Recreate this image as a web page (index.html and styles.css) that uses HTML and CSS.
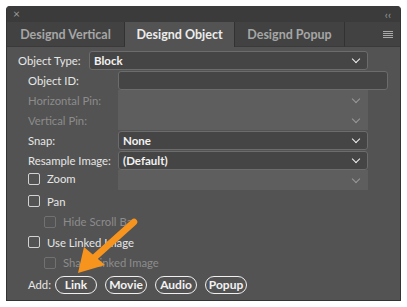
FILE: index.html
```html
<!DOCTYPE html>
<html lang="en">
<head>
  <meta charset="UTF-8" />
  <title>Designd Object</title>
  <link rel="stylesheet" href="styles.css">
</head>
<body>
  <div class="panel">
    <div class="titlebar">
      <span class="close">&times;</span>
      <span class="collapse">&lsaquo;&lsaquo;</span>
    </div>

    <div class="tabs">
      <div class="tab">Designd Vertical</div>
      <div class="tab active">Designd Object</div>
      <div class="tab">Designd Popup</div>
      <div class="tab-fill">
        <svg width="10" height="7" viewBox="0 0 10 7"><path d="M0 .5h10M0 2.5h10M0 4.5h10M0 6.5h10" stroke="#a9a9a9" stroke-width="1"/></svg>
      </div>
    </div>

    <div class="form">
      <div class="row first">
        <label class="lbl lbl-type">Object Type:</label>
        <div class="select wide">Block <span class="chev"></span></div>
      </div>
      <div class="row">
        <label class="lbl">Object ID:</label>
        <div class="input"></div>
      </div>
      <div class="row">
        <label class="lbl off">Horizontal Pin:</label>
        <div class="select disabled"><span class="chev"></span></div>
      </div>
      <div class="row">
        <label class="lbl off">Vertical Pin:</label>
        <div class="select disabled"><span class="chev"></span></div>
      </div>
      <div class="row">
        <label class="lbl">Snap:</label>
        <div class="select">None <span class="chev"></span></div>
      </div>
      <div class="row">
        <label class="lbl">Resample Image:</label>
        <div class="select">(Default) <span class="chev"></span></div>
      </div>
      <div class="row">
        <label class="lbl check zoom"><span class="box"></span>Zoom</label>
        <div class="select disabled tall"><span class="chev"></span></div>
      </div>
      <div class="row check-row pan">
        <label class="check"><span class="box"></span>Pan</label>
      </div>
      <div class="row check-row sub">
        <label class="check off"><span class="box"></span>Hide Scroll Bar</label>
      </div>
      <div class="row check-row linked">
        <label class="check"><span class="box"></span>Use Linked Image</label>
      </div>
      <div class="row check-row sub">
        <label class="check off"><span class="box"></span>Share Linked Image</label>
      </div>
      <div class="row add-row">
        <span>Add:</span>
        <button class="pill">Link</button>
        <button class="pill">Movie</button>
        <button class="pill">Audio</button>
        <button class="pill">Popup</button>
      </div>
    </div>
  </div>

  <!-- callout arrow drawn over the panel -->
  <svg class="arrow" width="407" height="307" viewBox="0 0 407 307">
    <line x1="134" y1="222" x2="95" y2="257" stroke="#f7941e" stroke-width="6.5" stroke-linecap="round"/>
    <polygon points="78,273 84,247 105,265" fill="#f7941e"/>
  </svg>
</body>
</html>
```

FILE: styles.css
```css
* { box-sizing: border-box; }

body {
  margin: 0;
  padding: 6px 6px 0 6px;
  background: #ffffff;
  font-family: 'Lato', 'Open Sans', sans-serif;
  font-size: 11.3px;
  color: #e6e6e6;
}

.panel {
  width: 395px;
  height: 295px;
  background: #535353;
  border: 1px solid #333333;
  border-top: none;
  border-radius: 4px 4px 0 0;
  overflow: hidden;
}

.titlebar {
  height: 16px;
  background: #3b3b3b;
  display: flex;
  justify-content: space-between;
  align-items: center;
  padding: 0 9px 0 6px;
  color: #9a9a9a;
}

.close { font-size: 12px; line-height: 1; }
.collapse { font-size: 11px; letter-spacing: 0; line-height: 1; }

.tabs {
  height: 25px;
  display: flex;
  background: #424242;
}

.tab {
  display: flex;
  align-items: center;
  justify-content: center;
  font-weight: 700;
  font-size: 12.5px;
  color: #a6a6a6;
  border-right: 1px solid #323232;
  border-bottom: 1px solid #3a3a3a;
}

.tab:nth-child(1) { width: 118px; }
.tab:nth-child(2) { width: 110px; }
.tab:nth-child(3) { width: 110px; }

.tab.active {
  background: #535353;
  color: #ececec;
  border-bottom: none;
}

.tab-fill {
  flex: 1;
  display: flex;
  align-items: center;
  justify-content: flex-end;
  padding-right: 7px;
  border-bottom: 1px solid #3a3a3a;
}

.form {
  padding: 3px 0 0 21px;
  display: flex;
  flex-direction: column;
}

.row {
  display: flex;
  align-items: center;
  height: 20px;
}

.row.first { margin-left: -10px; }

.lbl {
  width: 90px;
  flex-shrink: 0;
  white-space: nowrap;
}

.lbl-type { width: 71px; }

.off { color: #8c8c8c; }

.select, .input {
  height: 19px;
  width: 250px;
  background: #454545;
  border: 1px solid #6c6c6c;
  border-radius: 3px;
  display: flex;
  align-items: center;
  padding-left: 4px;
  font-weight: 700;
  font-size: 11.5px;
  color: #f2f2f2;
  position: relative;
}

.select.wide { width: 279px; }
.input { width: 270px; }

.select.disabled {
  background: #5e5e5e;
  border-color: #5e5e5e;
  border-radius: 0;
  height: 20px;
}

.chev {
  position: absolute;
  right: 8px;
  top: 4px;
  width: 6px;
  height: 6px;
  border-right: 1.5px solid #f0f0f0;
  border-bottom: 1.5px solid #f0f0f0;
  transform: rotate(45deg);
}

.disabled .chev { border-color: #9a9a9a; top: 5px; }

.check {
  display: flex;
  align-items: center;
  gap: 7px;
  white-space: nowrap;
}

.check.zoom { margin-top: -3px; }

.box {
  width: 12px;
  height: 12px;
  border: 1px solid #d2d2d2;
  border-radius: 2px;
  flex-shrink: 0;
}

.check.off .box { border-color: #717171; }

.check-row.pan { height: 22px; }
.check-row.sub { padding-left: 16px; height: 19px; }
.check-row.linked { height: 22px; }

.add-row {
  margin-top: 3px;
  gap: 8px;
  height: 19px;
}

.add-row span { margin-right: -4px; }

.pill {
  width: 42px;
  height: 18px;
  border: 1px solid #f0f0f0;
  border-radius: 9px;
  background: transparent;
  color: #f2f2f2;
  font-family: inherit;
  font-size: 12px;
  font-weight: 700;
  padding: 0;
}

.arrow {
  position: absolute;
  top: 0;
  left: 0;
  pointer-events: none;
}
```
